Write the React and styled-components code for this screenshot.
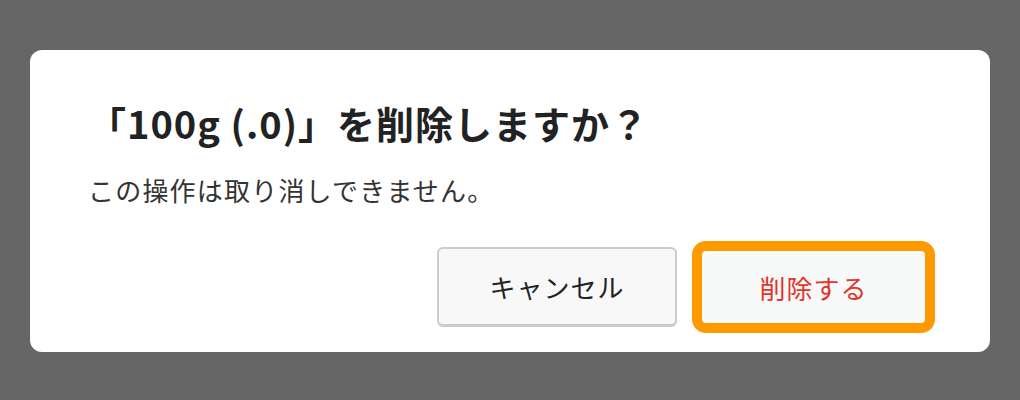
import React from 'react';
import styled, { createGlobalStyle } from 'styled-components';

const GlobalStyle = createGlobalStyle`
	html, body {
		margin: 0;
		padding: 0;
		background: #666666;
	}
	body {
		font-family: "Noto Sans CJK JP", "Noto Sans", sans-serif;
	}
`;

const Overlay = styled.div`
	width: 100%;
	min-height: 400px;
	background-color: #666666;
	padding: 50px 30px 0;
	box-sizing: border-box;
`;

const Dialog = styled.div`
	background-color: #ffffff;
	border-radius: 12px;
	padding: 46px 55px 19px 58px;
	box-sizing: border-box;
	display: flex;
	flex-direction: column;
`;

const Title = styled.h2`
	margin: 0;
	font-size: 38px;
	line-height: 54px;
	font-weight: 700;
	letter-spacing: 1px;
	color: #222222;
`;

const Message = styled.p`
	margin: 20px 0 0;
	font-size: 26px;
	line-height: 39px;
	letter-spacing: 1.2px;
	color: #333333;
`;

const Actions = styled.div`
	margin-top: 32px;
	display: flex;
	justify-content: flex-end;
	align-items: center;
	gap: 15px;
`;

const Button = styled.button`
	box-sizing: border-box;
	font-family: inherit;
	font-size: 26px;
	letter-spacing: 1px;
	display: flex;
	align-items: center;
	justify-content: center;
	cursor: pointer;
	background-color: ${(p) => (p.$danger ? '#f8f9f9' : '#f8f8f8')};
	color: ${(p) => (p.$danger ? '#e3332a' : '#222222')};
	width: ${(p) => (p.$focused ? '243px' : '240px')};
	height: ${(p) => (p.$focused ? '92px' : '80px')};
	border: ${(p) => (p.$focused ? '10px solid #ff9900' : '2px solid #cccccc')};
	border-bottom-width: ${(p) => (p.$focused ? '10px' : '3px')};
	border-radius: ${(p) => (p.$focused ? '14px' : '6px')};
	padding: 0;
	outline: none;
`;

export default function App() {
	return (
		<>
			<GlobalStyle />
			<Overlay>
				<Dialog role="dialog">
					<Title>「100g (.0)」を削除しますか？</Title>
					<Message>この操作は取り消しできません。</Message>
					<Actions>
						<Button>キャンセル</Button>
						<Button $danger $focused>
							削除する
						</Button>
					</Actions>
				</Dialog>
			</Overlay>
		</>
	);
}
